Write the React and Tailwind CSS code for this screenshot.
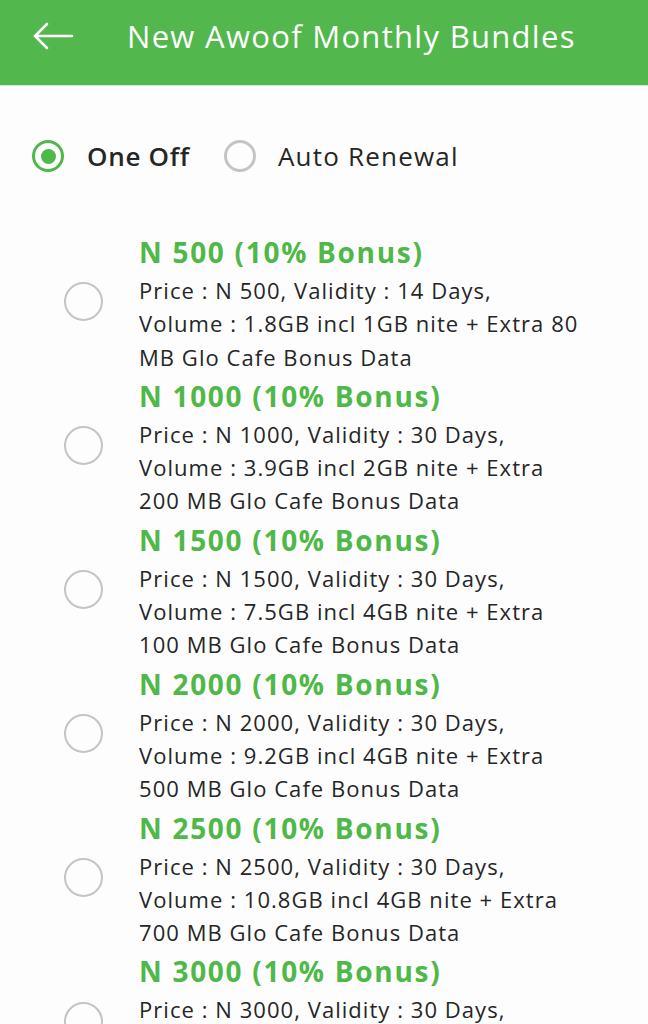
import React, { useState } from "react"

const bundles = [
  { amount: "500", days: "14", volume: "1.8GB incl 1GB nite + Extra 80", tail: "MB Glo Cafe Bonus Data" },
  { amount: "1000", days: "30", volume: "3.9GB incl 2GB nite + Extra", tail: "200 MB Glo Cafe Bonus Data" },
  { amount: "1500", days: "30", volume: "7.5GB incl 4GB nite + Extra", tail: "100 MB Glo Cafe Bonus Data" },
  { amount: "2000", days: "30", volume: "9.2GB incl 4GB nite + Extra", tail: "500 MB Glo Cafe Bonus Data" },
  { amount: "2500", days: "30", volume: "10.8GB incl 4GB nite + Extra", tail: "700 MB Glo Cafe Bonus Data" },
  { amount: "3000", days: "30", volume: "14GB incl 4GB nite + Extra", tail: "1 GB Glo Cafe Bonus Data" },
]

const Radio = ({ checked, size }) => (
  <div
    className={`flex shrink-0 items-center justify-center rounded-full ${size} ${
      checked ? "border-[#4fb848]" : "border-[#c4c4c4]"
    }`}
  >
    {checked && <div className="w-[15px] h-[15px] rounded-full bg-[#4fb848]" />}
  </div>
)

const App = () => {
  const [mode, setMode] = useState("one")
  const [picked, setPicked] = useState(null)

  return (
    <div className="w-[648px] h-[1024px] overflow-hidden bg-[#fdfdfd] text-[#262626] font-['Open_Sans',sans-serif]">
      <div className="flex items-center h-[86px] pb-[13px] bg-[#52b74c] border-b border-[#d8e8d6] text-white">
        <svg className="ml-[32px] w-[42px] h-[30px]" viewBox="0 0 42 30" fill="none" stroke="white" strokeWidth="2.6" strokeLinecap="round">
          <path d="M40 15H3M15 3L3 15l12 12" />
        </svg>
        <p className="ml-[53px] text-[31px] leading-none tracking-[1.3px]">New Awoof Monthly Bundles</p>
      </div>

      <div className="flex items-center h-[30px] mt-[55px] pl-[32px]">
        <div onClick={() => setMode("one")} className="flex items-center cursor-pointer">
          <Radio checked={mode === "one"} size="w-[32px] h-[32px] border-[3px]" />
          <p className="ml-[23px] text-[26px] font-semibold tracking-[0.7px]">One Off</p>
        </div>
        <div onClick={() => setMode("auto")} className="flex items-center ml-[34px] cursor-pointer">
          <Radio checked={mode === "auto"} size="w-[32px] h-[32px] border-[3px]" />
          <p className="ml-[22px] text-[26px] tracking-[1.2px]">Auto Renewal</p>
        </div>
      </div>

      <div className="flex flex-col mt-[59px]">
        {bundles.map((b) => (
          <div key={b.amount} onClick={() => setPicked(b.amount)} className="flex items-center cursor-pointer">
            <div className="w-[139px] flex pl-[64px]">
              <Radio checked={picked === b.amount} size="w-[39px] h-[39px] border-[2px]" />
            </div>
            <div className="flex flex-col">
              <p className="text-[28px] leading-[44px] font-bold text-[#4fb848] tracking-[1.7px]">N {b.amount} (10% Bonus)</p>
              <p className="text-[22px] leading-[33.3px] tracking-[1.05px]">Price : N {b.amount}, Validity : {b.days} Days,</p>
              <p className="text-[22px] leading-[33.3px] tracking-[1.05px]">Volume : {b.volume}</p>
              <p className="text-[22px] leading-[33.3px] tracking-[1.05px]">{b.tail}</p>
            </div>
          </div>
        ))}
      </div>
    </div>
  )
}

export default App
